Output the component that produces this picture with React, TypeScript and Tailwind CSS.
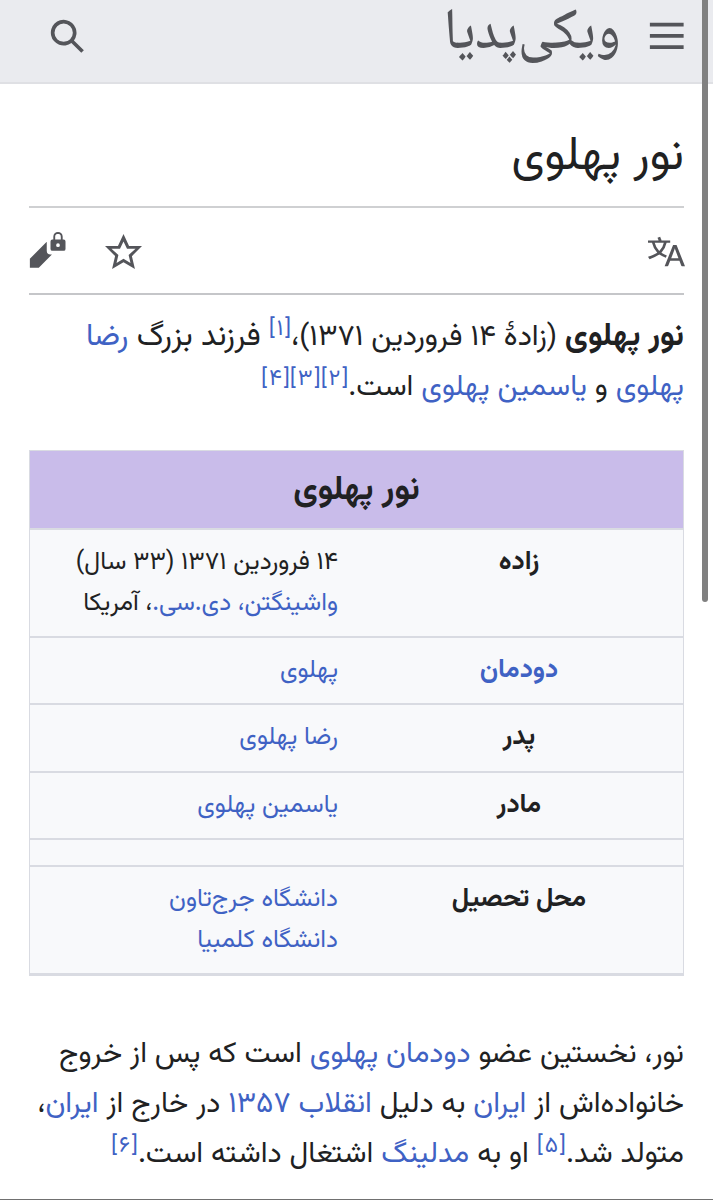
import React from "react";

interface LinkProps {
  children: React.ReactNode;
}

interface InfoRowProps {
  label: React.ReactNode;
  children: React.ReactNode;
  className?: string;
}

function WikiLink({ children }: LinkProps) {
  return (
    <a href="#" className="text-[#3f62c4]">
      {children}
    </a>
  );
}

function Ref({ children }: LinkProps) {
  return (
    <sup className="relative top-[-10px] align-baseline text-[22.5px] leading-none">
      <WikiLink>
        [<span className="mx-[2px]">{children}</span>]
      </WikiLink>
    </sup>
  );
}

function Line({ children }: LinkProps) {
  return <span className="block whitespace-nowrap">{children}</span>;
}

function InfoRow({ label, children, className = "h-[67.4px]" }: InfoRowProps) {
  return (
    <div
      className={`flex border-t-2 border-[#d9dbe2] pt-[12px] leading-[41px] ${className}`}
    >
      <div className="w-[328px] text-center text-[26.4px] font-bold">
        {label}
      </div>
      <div className="flex-1 pr-[17px] text-[24.9px]">{children}</div>
    </div>
  );
}

function Icon({ d, className }: { d: string; className: string }) {
  return (
    <svg viewBox="0 0 20 20" fill="currentColor" className={className}>
      <path fillRule="evenodd" d={d} />
    </svg>
  );
}

const icons = {
  menu: "M1 3v2h18V3zm0 8h18V9H1zm0 6h18v-2H1z",
  search:
    "M12.2 13.6a7 7 0 1 1 1.4-1.4l5.4 5.4-1.4 1.4zM3 8a5 5 0 1 0 10 0A5 5 0 0 0 3 8",
  star: "M20 7h-7L10 .5 7 7H0l5.46 5.47-1.64 7 6.18-3.7 6.18 3.73-1.63-7zm-10 6.9-3.76 2.27 1-4.28L3.5 8.5h4.61L10 4.6l1.9 3.9h4.6l-3.73 3.4 1 4.28z",
  editLock:
    "M12 12a2 2 0 0 1-2-2V5.25l-9 9V19h4.75l7-7zm7-8h-.5V2.5a2.5 2.5 0 0 0-5 0V4H13a1 1 0 0 0-1 1v4a1 1 0 0 0 1 1h6a1 1 0 0 0 1-1V5a1 1 0 0 0-1-1m-3 4a1 1 0 1 1 1-1 1 1 0 0 1-1 1m1.5-4h-3V2.75C14.5 2 14.5 1 16 1s1.5 1 1.5 1.75z",
  language:
    "M20 18h-1.44a.6.6 0 0 1-.4-.12.8.8 0 0 1-.23-.31L17 15h-5l-1 2.54a.8.8 0 0 1-.22.3.6.6 0 0 1-.4.14H9l4.55-11.47h1.89zm-3.53-4.31L14.89 9.5a12 12 0 0 1-.39-1.24q-.09.37-.19.69l-.19.56-1.58 4.19zm-6.3-1.58a13.4 13.4 0 0 1-2.91-1.41 11.46 11.46 0 0 0 2.81-5.37H12V4H7.31a4 4 0 0 0-.2-.56C6.87 2.79 6.6 2 6.6 2l-1.47.5s.4.89.6 1.5H0v1.33h2.15A11.23 11.23 0 0 0 5 10.7a17.2 17.2 0 0 1-5 2.1q.56.82.87 1.38a23.3 23.3 0 0 0 5.22-2.51 15.6 15.6 0 0 0 3.56 1.77zM3.63 5.33h4.91a8.1 8.1 0 0 1-2.45 4.45 9.1 9.1 0 0 1-2.46-4.45",
};

export default function App() {
  return (
    <div
      dir="rtl"
      lang="fa"
      className="relative h-[1200px] w-[713px] overflow-hidden border-b border-[#707070] bg-white font-['Vazirmatn','Noto_Sans_Arabic','DejaVu_Sans',sans-serif] text-[#202122]"
    >
      <header className="flex h-[84px] items-start border-b-2 border-[#dfe0e4] bg-[#eaebef] pr-[28px] pl-[49px] text-[#54555a]">
        <Icon d={icons.menu} className="mt-[17px] size-[37.5px]" />
        <div className="mr-[27px] h-[73px] origin-bottom scale-y-[1.12] font-['Noto_Naskh_Arabic','Noto_Sans_Arabic',serif] text-[52px] leading-[80px] font-medium whitespace-nowrap">
          ویکی‌پدیا
        </div>
        <Icon d={icons.search} className="mt-[18px] mr-auto size-[36.7px]" />
      </header>

      <main className="px-[29px]">
        <h1 className="h-[124px] border-b-2 border-[#cfd0d2] pt-[38px] text-[47px] leading-[72px]">
          نور پهلوی
        </h1>

        <div className="flex h-[87px] items-start border-b-2 border-[#c5c6c9] pt-[24px] text-[#54555a]">
          <Icon d={icons.language} className="mt-px -mr-px size-[37px]" />
          <Icon d={icons.star} className="mt-px mr-auto size-[37px]" />
          <Icon d={icons.editLock} className="mr-[39px] -ml-px size-[37.5px]" />
        </div>

        <p className="h-[155px] pt-[17px] text-[29.3px] leading-[50px]">
          <Line>
            <b className="text-[32px]">نور پهلوی</b>{" "}
            <span className="text-[29.6px]">(زادهٔ ۱۴ فروردین ۱۳۷۱)،</span>
            <Ref>۱</Ref>{" "}
            <span className="text-[31.2px]">
              فرزند بزرگ <WikiLink>رضا</WikiLink>
            </span>
          </Line>
          <Line>
            <WikiLink>پهلوی</WikiLink> و <WikiLink>یاسمین پهلوی</WikiLink> است.
            <Ref>۲</Ref>
            <Ref>۳</Ref>
            <Ref>۴</Ref>
          </Line>
        </p>

        <section className="border-x border-t border-b-[3px] border-[#d9dbe2] bg-[#f8f9fb]">
          <h2 className="h-[77px] bg-[#c9bcea] text-center text-[34px] leading-[79px] font-bold">
            نور پهلوی
          </h2>
          <InfoRow label="زاده" className="h-[108px]">
            <Line>۱۴ فروردین ۱۳۷۱ (۳۳ سال)</Line>
            <Line>
              <WikiLink>واشینگتن، دی.سی.</WikiLink>، آمریکا
            </Line>
          </InfoRow>
          <InfoRow label={<WikiLink>دودمان</WikiLink>}>
            <WikiLink>پهلوی</WikiLink>
          </InfoRow>
          <InfoRow label="پدر">
            <WikiLink>رضا پهلوی</WikiLink>
          </InfoRow>
          <InfoRow label="مادر">
            <WikiLink>یاسمین پهلوی</WikiLink>
          </InfoRow>
          <div className="h-[27px] border-t-2 border-[#d9dbe2]" />
          <InfoRow label="محل تحصیل" className="h-[108px]">
            <Line>
              <WikiLink>دانشگاه جرج‌تاون</WikiLink>
            </Line>
            <Line>
              <WikiLink>دانشگاه کلمبیا</WikiLink>
            </Line>
          </InfoRow>
        </section>

        <p className="pt-[54px] text-[29.4px] leading-[50px]">
          <Line>
            نور، نخستین عضو <WikiLink>دودمان پهلوی</WikiLink> است که پس از خروج
          </Line>
          <Line>
            خانواده‌اش از <WikiLink>ایران</WikiLink> به دلیل{" "}
            <WikiLink>انقلاب ۱۳۵۷</WikiLink> در خارج از{" "}
            <WikiLink>ایران</WikiLink>،
          </Line>
          <Line>
            متولد شد.<Ref>۵</Ref> او به <WikiLink>مدلینگ</WikiLink> اشتغال داشته
            است.<Ref>۶</Ref>
          </Line>
        </p>
      </main>

      {/* Scroll indicator */}
      <div className="absolute top-[-6px] right-[5px] h-[608px] w-[6px] rounded-full bg-[#808080]" />
    </div>
  );
}
